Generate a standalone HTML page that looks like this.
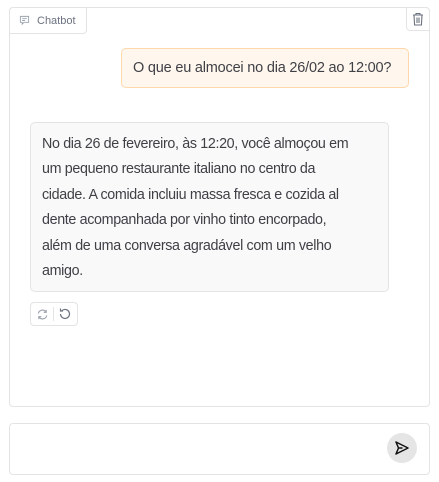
<!DOCTYPE html>
<html><head><meta charset="utf-8"><style>
*{box-sizing:border-box;margin:0;padding:0}
body{width:439px;height:482px;background:#fff;font-family:"Liberation Sans",sans-serif;position:relative;overflow:hidden;color:#3f3f46}
.box{position:absolute;border:1px solid #e4e4e7;border-radius:4px}
.tab{position:absolute;left:9px;top:7px;width:78px;height:27px;border:1px solid #e4e4e7;border-top-left-radius:4px;border-bottom-right-radius:4px;background:#fff;font-size:11px;color:#6b7280;display:flex;align-items:center;padding-left:9px;gap:7px}
.trash{position:absolute;left:406px;top:7px;width:24px;height:24px;border:1px solid #e4e4e7;border-bottom-left-radius:4px;border-top-right-radius:4px;background:#fff;display:flex;align-items:center;justify-content:center}
.user{position:absolute;left:121px;top:48px;width:288px;height:40px;background:#fff7ed;border:1px solid #fed7aa;border-radius:5px;font-size:14.5px;line-height:38px;padding-left:11px;white-space:nowrap;letter-spacing:-0.2px}
.bot{position:absolute;left:30px;top:122px;width:359px;height:170px;background:#f9f9f9;border:1px solid #e4e4e7;border-radius:5px;font-size:14.3px;line-height:25.4px;padding:9px 0 0 11px;white-space:nowrap;letter-spacing:-0.35px}
.acts{position:absolute;left:30px;top:302px;width:48px;height:24px;border:1px solid #e4e4e7;border-radius:4px;display:flex;align-items:center}
.send{position:absolute;left:387px;top:433px;width:30px;height:30px;border-radius:50%;background:#e5e5e5;display:flex;align-items:center;justify-content:center}
</style></head><body>
<div class="box" style="left:9px;top:7px;width:421px;height:400px"></div>
<div class="tab"><svg width="11" height="11" viewBox="0 0 12 12" fill="none" stroke="#9ca3af" stroke-width="1"><path d="M1.5 1.5h9v6.5h-5l-2 2v-2h-2z"/><path d="M3.5 4h5M3.5 6h3"/></svg>Chatbot</div>
<div class="trash"><svg width="12" height="14" viewBox="0 0 12 14" fill="none" stroke="#6b7280" stroke-width="1.1"><path d="M1 3h10M4 3V1.5h4V3M2 3l.6 10h6.8L10 3M5 5.5v5.5M7 5.5v5.5"/></svg></div>
<div class="user">O que eu almocei no dia 26/02 ao 12:00?</div>
<div class="bot">No dia 26 de fevereiro, às 12:20, você almoçou em<br>um pequeno restaurante italiano no centro da<br>cidade. A comida incluiu massa fresca e cozida al<br>dente acompanhada por vinho tinto encorpado,<br>além de uma conversa agradável com um velho<br>amigo.</div>
<div class="acts">
<svg style="margin-left:5px" width="13" height="13" viewBox="0 0 14 14" fill="none" stroke="#9ca3af" stroke-width="1.2"><path d="M2.5 6a4.5 4.5 0 0 1 8.3-1.5M11.5 8a4.5 4.5 0 0 1-8.3 1.5M11 2v2.7H8.3M3 12V9.3h2.7"/></svg>
<div style="width:1px;height:14px;background:#e4e4e7;margin:0 4px"></div>
<svg width="14" height="14" viewBox="0 0 14 14" fill="none" stroke="#6b7280" stroke-width="1.2"><path d="M2.5 7a4.5 4.5 0 1 0 1.5-3.4M2.5 1.5v2.5h2.5"/></svg>
</div>
<div class="box" style="left:9px;top:423px;width:421px;height:52px"></div>
<div class="send"><svg width="16" height="16" viewBox="0 0 16 16" fill="none" stroke="#111" stroke-width="1.5" stroke-linejoin="round"><path d="M2 2l12 6-12 6 2.5-6z M4.5 8h4"/></svg></div>
</body></html>
